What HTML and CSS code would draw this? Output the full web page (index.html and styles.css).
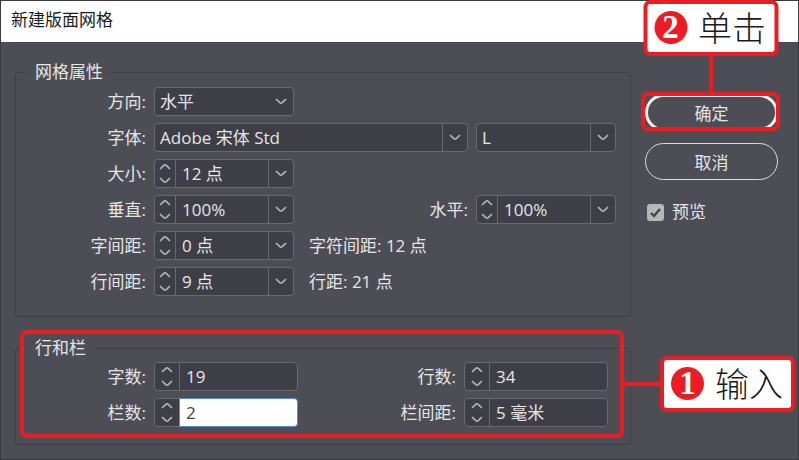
FILE: index.html
```
<!DOCTYPE html>
<html lang="zh-CN">
<head>
    <meta charset="UTF-8">
    <meta name="viewport" content="width=device-width, initial-scale=1.0">
    <title>新建版面网格</title>
    <link rel="stylesheet" href="styles.css">
</head>
<body>
    <svg class="symbols" aria-hidden="true">
        <symbol id="down" viewBox="0 0 12 7"><path d="M1 1 L4.8 4.6 Q6 5.6 7.2 4.6 L11 1"/></symbol>
        <symbol id="up" viewBox="0 0 12 7"><path d="M1 6 L4.8 2.4 Q6 1.4 7.2 2.4 L11 6"/></symbol>
    </svg>

    <form class="dialog">
        <header class="titlebar">
            <h1>新建版面网格</h1>
        </header>

        <div class="content">
            <div class="groups">
                <fieldset class="group">
                    <legend>网格属性</legend>

                    <div class="row">
                        <label class="name" for="direction">方向:</label>
                        <div class="select">
                            <select id="direction">
                                <option>水平</option>
                                <option>垂直</option>
                            </select>
                            <svg class="arrow"><use href="#down"/></svg>
                        </div>
                    </div>

                    <div class="row">
                        <label class="name" for="font">字体:</label>
                        <div class="select split wide">
                            <select id="font">
                                <option>Adobe 宋体 Std</option>
                            </select>
                            <svg class="arrow"><use href="#down"/></svg>
                        </div>
                        <div class="select split">
                            <select id="fontStyle" aria-label="字体样式">
                                <option>L</option>
                            </select>
                            <svg class="arrow"><use href="#down"/></svg>
                        </div>
                    </div>

                    <div class="row">
                        <label class="name" for="size">大小:</label>
                        <div class="field">
                            <div class="stepper">
                                <button type="button" aria-label="增加"><svg><use href="#up"/></svg></button>
                                <button type="button" aria-label="减少"><svg><use href="#down"/></svg></button>
                            </div>
                            <input type="text" id="size" value="12 点">
                            <button type="button" class="drop" aria-label="选择大小"><svg><use href="#down"/></svg></button>
                        </div>
                    </div>

                    <div class="row">
                        <label class="name" for="vertical">垂直:</label>
                        <div class="field">
                            <div class="stepper">
                                <button type="button" aria-label="增加"><svg><use href="#up"/></svg></button>
                                <button type="button" aria-label="减少"><svg><use href="#down"/></svg></button>
                            </div>
                            <input type="text" id="vertical" value="100%">
                            <button type="button" class="drop" aria-label="选择垂直缩放"><svg><use href="#down"/></svg></button>
                        </div>
                        <label class="name second" for="horizontal">水平:</label>
                        <div class="field">
                            <div class="stepper">
                                <button type="button" aria-label="增加"><svg><use href="#up"/></svg></button>
                                <button type="button" aria-label="减少"><svg><use href="#down"/></svg></button>
                            </div>
                            <input type="text" id="horizontal" value="100%">
                            <button type="button" class="drop" aria-label="选择水平缩放"><svg><use href="#down"/></svg></button>
                        </div>
                    </div>

                    <div class="row">
                        <label class="name" for="charGap">字间距:</label>
                        <div class="field">
                            <div class="stepper">
                                <button type="button" aria-label="增加"><svg><use href="#up"/></svg></button>
                                <button type="button" aria-label="减少"><svg><use href="#down"/></svg></button>
                            </div>
                            <input type="text" id="charGap" value="0 点">
                            <button type="button" class="drop" aria-label="选择字间距"><svg><use href="#down"/></svg></button>
                        </div>
                        <span class="info">字符间距: 12 点</span>
                    </div>

                    <div class="row">
                        <label class="name" for="lineGap">行间距:</label>
                        <div class="field">
                            <div class="stepper">
                                <button type="button" aria-label="增加"><svg><use href="#up"/></svg></button>
                                <button type="button" aria-label="减少"><svg><use href="#down"/></svg></button>
                            </div>
                            <input type="text" id="lineGap" value="9 点">
                            <button type="button" class="drop" aria-label="选择行间距"><svg><use href="#down"/></svg></button>
                        </div>
                        <span class="info">行距: 21 点</span>
                    </div>
                </fieldset>

                <div class="marked">
                    <fieldset class="group columns">
                        <legend>行和栏</legend>

                        <div class="row">
                            <label class="name" for="chars">字数:</label>
                            <div class="field large">
                                <div class="stepper">
                                    <button type="button" aria-label="增加"><svg><use href="#up"/></svg></button>
                                    <button type="button" aria-label="减少"><svg><use href="#down"/></svg></button>
                                </div>
                                <input type="text" id="chars" value="19">
                            </div>
                            <label class="name second" for="lines">行数:</label>
                            <div class="field large">
                                <div class="stepper">
                                    <button type="button" aria-label="增加"><svg><use href="#up"/></svg></button>
                                    <button type="button" aria-label="减少"><svg><use href="#down"/></svg></button>
                                </div>
                                <input type="text" id="lines" value="34">
                            </div>
                        </div>

                        <div class="row">
                            <label class="name" for="cols">栏数:</label>
                            <div class="field large">
                                <div class="stepper">
                                    <button type="button" aria-label="增加"><svg><use href="#up"/></svg></button>
                                    <button type="button" aria-label="减少"><svg><use href="#down"/></svg></button>
                                </div>
                                <input type="text" id="cols" class="editing" value="2">
                            </div>
                            <label class="name second" for="colGap">栏间距:</label>
                            <div class="field large">
                                <div class="stepper">
                                    <button type="button" aria-label="增加"><svg><use href="#up"/></svg></button>
                                    <button type="button" aria-label="减少"><svg><use href="#down"/></svg></button>
                                </div>
                                <input type="text" id="colGap" value="5 毫米">
                            </div>
                        </div>
                    </fieldset>
                    <div class="mark mark-columns">
                        <div class="callout"><span class="badge">1</span>输入</div>
                    </div>
                </div>
            </div>

            <div class="actions">
                <div class="marked">
                    <button type="submit" class="button primary">确定</button>
                    <div class="mark mark-ok">
                        <div class="callout"><span class="badge">2</span>单击</div>
                    </div>
                </div>
                <button type="button" class="button">取消</button>
                <label class="check">
                    <input type="checkbox" checked>
                    预览
                </label>
            </div>
        </div>
    </form>
</body>
</html>
```
FILE: styles.css
```
* {
    box-sizing: border-box;
}
body {
    margin: 0;
    font-family: "Open Sans", "Noto Sans CJK SC", sans-serif;
    font-size: 17px;
    line-height: 24px;
    color: #e6e6e6;
}
input, select, button {
    font: inherit;
    color: inherit;
    margin: 0;
}
.symbols {
    position: absolute;
    width: 0;
    height: 0;
}
svg {
    display: block;
    width: 12px;
    height: 7px;
    fill: none;
    stroke: #b4b4b8;
    stroke-width: 1.7;
}
.dialog {
    display: flex;
    flex-direction: column;
    min-height: 100vh;
    border: 1px solid #3a3a3f;
    background-color: #4d4d55;
}
.titlebar {
    padding: 7px 10px 10px;
    background-color: #ffffff;
}
h1 {
    margin: 0;
    font-size: 17px;
    font-weight: 400;
    color: #1c1c1c;
}
.content {
    display: flex;
    gap: 14px;
    padding: 18px 20px 14px 14px;
}
.groups {
    display: flex;
    flex-direction: column;
    flex: 1;
    gap: 19px;
    min-width: 0;
}

/* Grupos de campos */
.group {
    display: flex;
    flex-direction: column;
    gap: 7px;
    margin: 0;
    min-width: 0;
    padding: 3px 14px 20px 0;
    border: 1px solid #3f3f47;
    border-radius: 3px;
}
.columns {
    padding: 2px 22px 17px 0;
}
legend {
    margin-left: 12px;
    padding: 0 7px;
}
.row {
    display: flex;
    align-items: center;
    gap: 8px;
}
.name {
    width: 130px;
    text-align: right;
    white-space: nowrap;
}
.second {
    flex: 1;
}
.info {
    margin-left: 7px;
}

/* Controles */
.select, .field {
    position: relative;
    display: flex;
    width: 140px;
    height: 29px;
    border: 1px solid #686971;
    border-radius: 4px;
    background-color: #3e3e46;
}
.wide {
    flex: 1;
}
select {
    appearance: none;
    width: 100%;
    padding: 0 26px 0 5px;
    border: none;
    background: none;
}
option {
    background-color: #3e3e46;
}
.arrow {
    position: absolute;
    top: 10px;
    right: 6px;
    pointer-events: none;
}
.split select {
    border-right: 25px solid transparent;
    padding-right: 0;
}
.split::after {
    content: "";
    position: absolute;
    top: 0;
    bottom: 0;
    right: 24px;
    border-left: 1px solid #686971;
}
.stepper {
    display: flex;
    flex-direction: column;
    width: 21px;
    border-right: 1px solid #686971;
}
.stepper button, .drop {
    display: flex;
    flex: 1;
    align-items: center;
    justify-content: center;
    padding: 0;
    border: none;
    background: none;
}
.field .drop {
    flex: none;
    width: 25px;
    border-left: 1px solid #686971;
}
.field input {
    flex: 1;
    min-width: 0;
    padding: 0 6px;
    border: none;
    background: none;
    outline: none;
}
.large {
    width: 144px;
}
.large .stepper {
    width: 25px;
}
.field .editing {
    margin: -1px;
    border: 1px solid #4d8fdb;
    border-radius: 0 4px 4px 0;
    background-color: #ffffff;
    color: #444444;
}

/* Botones */
.actions {
    display: flex;
    flex-direction: column;
    gap: 12px;
    width: 133px;
    padding-top: 34px;
}
.button {
    width: 100%;
    height: 37px;
    padding: 2px 0 0;
    border: 1px solid #dcdcdc;
    border-radius: 19px;
    background: none;
}
.primary {
    display: block;
    border: 3px solid #f4f4f4;
}
.check {
    display: flex;
    align-items: center;
    gap: 8px;
    padding: 8px 2px;
}
.check input {
    appearance: none;
    width: 17px;
    height: 17px;
    border-radius: 3px;
    background: #b7b7b9 url("data:image/svg+xml,%3Csvg xmlns='http://www.w3.org/2000/svg' viewBox='0 0 17 17'%3E%3Cpath d='M4 9 L7 12 L13 5' fill='none' stroke='%2344444b' stroke-width='2.4'/%3E%3C/svg%3E");
}

/* Marcas rojas con los pasos */
.marked {
    position: relative;
}
.mark {
    position: absolute;
    border: 4px solid #ed1c24;
    border-radius: 7px;
    pointer-events: none;
}
.mark-columns {
    top: -6px;
    right: 7px;
    bottom: 7px;
    left: 5px;
}
.mark-ok {
    top: -2px;
    right: -2px;
    bottom: 0;
    left: -4px;
}
.mark::before {
    content: "";
    position: absolute;
    background-color: #ed1c24;
}
.mark-columns::before {
    top: calc(50% - 2px);
    left: 100%;
    width: 42px;
    height: 4px;
}
.mark-ok::before {
    bottom: 100%;
    left: calc(50% - 2px);
    width: 4px;
    height: 42px;
}
.callout {
    position: absolute;
    display: flex;
    align-items: center;
    gap: 11px;
    height: 56px;
    padding: 0 8px 2px 7px;
    border: 4px solid #ed1c24;
    border-radius: 7px;
    background-color: #ffffff;
    color: #1a1a1a;
    font-family: "Noto Sans CJK SC", sans-serif;
    font-size: 34px;
    font-weight: 300;
    line-height: 46px;
    white-space: nowrap;
}
.mark-columns .callout {
    top: 50%;
    left: calc(100% + 40px);
    transform: translateY(-50%);
}
.mark-ok .callout {
    bottom: calc(100% + 40px);
    left: 50%;
    transform: translateX(-50%);
}
.badge {
    width: 33px;
    height: 33px;
    border-radius: 50%;
    background-color: #ed1c24;
    color: #ffffff;
    font-family: "Liberation Serif", serif;
    font-size: 33px;
    font-weight: 700;
    line-height: 33px;
    text-align: center;
}
```
